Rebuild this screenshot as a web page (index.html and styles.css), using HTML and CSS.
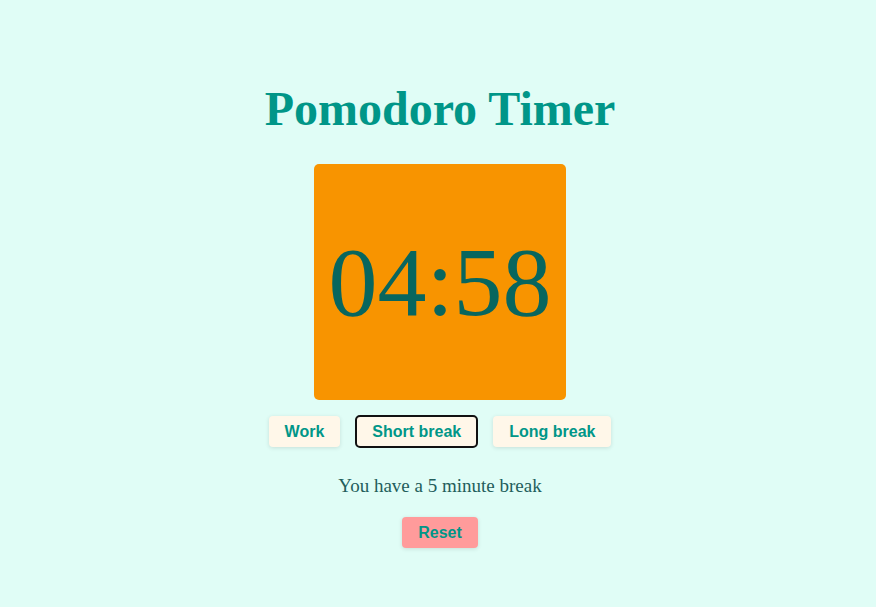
FILE: index.html
```html
<!DOCTYPE html>
<html lang="en">
<head>
<meta charset="utf-8">
<title>Pomodoro Timer</title>
<link rel="stylesheet" href="styles.css">
</head>
<body>
  <main class="app">
    <h1 class="title">Pomodoro Timer</h1>
    <div class="timer">04:58</div>
    <div class="modes">
      <button class="mode">Work</button>
      <button class="mode mode-active">Short break</button>
      <button class="mode">Long break</button>
    </div>
    <p class="message">You have a 5 minute break</p>
    <button class="reset">Reset</button>
  </main>
</body>
</html>
```

FILE: styles.css
```css
html, body {
  margin: 0;
  padding: 0;
  background: #e0fdf6;
  height: 100%;
}

.app {
  display: flex;
  flex-direction: column;
  align-items: center;
  padding: 81px 0 0 4px;
  font-family: "Liberation Serif", "Times New Roman", serif;
}

.title {
  margin: 0 0 28px;
  font-size: 48px;
  font-weight: bold;
  line-height: 55px;
  color: #009688;
}

.timer {
  box-sizing: border-box;
  width: 252px;
  height: 236px;
  display: flex;
  align-items: center;
  justify-content: center;
  background: #f89400;
  border-radius: 5px;
  color: #08665e;
  font-size: 98px;
  line-height: 1;
}

.modes {
  display: flex;
  gap: 16px;
  margin-top: 16px;
}

.mode, .reset {
  box-sizing: border-box;
  height: 31px;
  padding: 0 16px;
  border: none;
  border-radius: 4px;
  font-family: "Liberation Sans", Arial, sans-serif;
  font-size: 16px;
  font-weight: bold;
  color: #009688;
  cursor: pointer;
  box-shadow: 0 1px 4px rgba(0, 0, 0, 0.12);
}

.mode {
  background: #fff7e9;
}

.mode-active {
  outline: 2px solid #111;
  outline-offset: -1px;
  box-shadow: none;
}

.message {
  margin: 28px 0 0;
  font-size: 19px;
  line-height: 22px;
  color: #235e5c;
}

.reset {
  margin-top: 20px;
  background: #ff9b9b;
}
```
